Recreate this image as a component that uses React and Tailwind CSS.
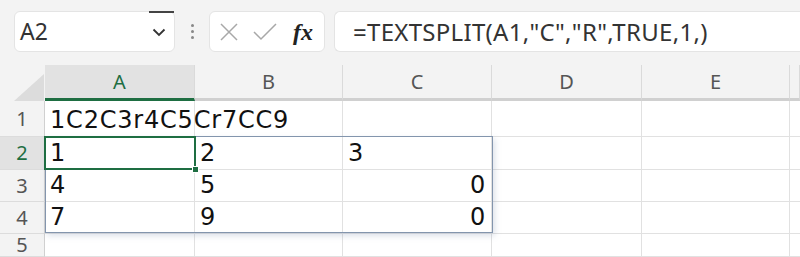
import React from "react";

const cols = ["A", "B", "C", "D", "E", ""];
const colW = [150, 148, 149, 150, 148, 10];
const rowH = [36, 33, 32, 32, 23];

const data = [
  ["1C2C3r4C5Cr7CC9", "", "", "", "", ""],
  ["1", "2", "3", "", "", ""],
  ["4", "5", "0", "", "", ""],
  ["7", "9", "0", "", "", ""],
  ["", "", "", "", "", ""],
];

const cellFont = { fontFamily: '"DejaVu Sans", "Noto Sans", sans-serif' };

const App = () => {
  return (
    <div className="w-[800px] h-[257px] overflow-hidden bg-[#f3f3f3] select-none" style={{ fontFamily: '"Noto Sans", "Open Sans", sans-serif' }}>
      {/* Formula bar */}
      <div className="h-[65px] flex items-start pt-[11px] pl-[14px] gap-0">
        <div className="relative w-[161px] h-[41px] bg-white rounded-md border border-[#e4e4e4] flex items-center pl-[5px] pr-[8px]">
          <div className="absolute -top-px left-[134px] w-[25px] h-[2px] bg-[#444]" />
          <span className="text-[23px] text-[#333] flex-1">A2</span>
          <svg width="14" height="9" viewBox="0 0 14 9" className="mt-[2px]">
            <path d="M1.5 1.5 L7 7 L12.5 1.5" fill="none" stroke="#333" strokeWidth="1.8" />
          </svg>
        </div>
        <div className="w-[34px] h-[41px] flex flex-col items-center justify-center gap-[3px]">
          <span className="w-[3px] h-[3px] rounded-full bg-[#888]" />
          <span className="w-[3px] h-[3px] rounded-full bg-[#888]" />
          <span className="w-[3px] h-[3px] rounded-full bg-[#888]" />
        </div>
        <div className="w-[116px] h-[41px] bg-white rounded-md border border-[#e4e4e4] flex items-center pl-[9px]">
          <svg width="20" height="20" viewBox="0 0 20 20">
            <path d="M2 2 L18 18 M18 2 L2 18" stroke="#a8a8a8" strokeWidth="1.5" />
          </svg>
          <svg width="24" height="18" viewBox="0 0 24 18" className="ml-[14px]">
            <path d="M1 9 L8 16 L23 1" fill="none" stroke="#a8a8a8" strokeWidth="1.5" />
          </svg>
          <span className="ml-[16px] text-[24px] italic font-bold text-[#222] leading-none" style={{ fontFamily: '"Liberation Serif", "DejaVu Serif", serif' }}>
            fx
          </span>
        </div>
        <div className="ml-[9px] flex-1 h-[41px] bg-white rounded-l-md border border-r-0 border-[#e4e4e4] flex items-center pl-[18px]">
          <span className="text-[24px] text-[#333] leading-none tracking-[0.3px]">=TEXTSPLIT(A1,"C","R",TRUE,1,)</span>
        </div>
      </div>

      {/* Grid */}
      <div className="relative">
        {/* Column headers */}
        <div className="flex h-[36px]">
          <div className="w-[45px] shrink-0 flex items-end justify-end">
            <svg width="31" height="27" viewBox="0 0 31 27">
              <path d="M30 0 L30 27 L0 27 Z" fill="#dcdcdc" />
            </svg>
          </div>
          {cols.map((c, i) => (
            <div
              key={i}
              style={{ width: colW[i] }}
              className={`shrink-0 flex items-center justify-center text-[20px] border-r border-[#dadada] ${
                i === 0 ? "bg-[#e2e2e2] text-[#1e6e42] border-b-[3px] border-b-[#1e6e42]" : "text-[#555] border-b-[3px] border-b-[#d0d0d0]"
              }`}
            >
              {c}
            </div>
          ))}
        </div>

        {/* Rows */}
        {data.map((row, r) => (
          <div key={r} className="flex" style={{ height: rowH[r] }}>
            <div
              className={`w-[45px] shrink-0 flex items-center justify-center text-[20px] border-r border-[#d0d0d0] border-b border-b-[#dcdcdc] ${
                r === 1 ? "bg-[#e2e2e2] text-[#1e6e42]" : "text-[#555]"
              }`}
            >
              {r + 1}
            </div>
            {row.map((v, c) => (
              <div
                key={c}
                style={{ width: colW[c], ...cellFont }}
                className={`shrink-0 bg-white border-r border-b border-[#e1e1e1] flex items-end pb-[1px] px-[5px] text-[24px] tracking-[0.8px] text-[#111] leading-[30px] whitespace-nowrap ${
                  c === 2 && r > 1 ? "justify-end" : "justify-start"
                }`}
              >
                <span className="relative z-10">{v}</span>
              </div>
            ))}
          </div>
        ))}

        {/* Spill range border */}
        <div className="absolute z-20 left-[45px] top-[71px] w-[448px] h-[97px] border border-[#8395ad] shadow-[2px_3px_6px_rgba(120,140,170,0.25)] pointer-events-none" />

        {/* Active cell */}
        <div className="absolute z-20 left-[44px] top-[71px] w-[152px] h-[34px] border-2 border-[#1e6e42] pointer-events-none" />
        <div className="absolute z-20 left-[192px] top-[101px] w-[7px] h-[7px] bg-[#1e6e42] border border-white pointer-events-none" />
      </div>
    </div>
  );
};

export default App;
